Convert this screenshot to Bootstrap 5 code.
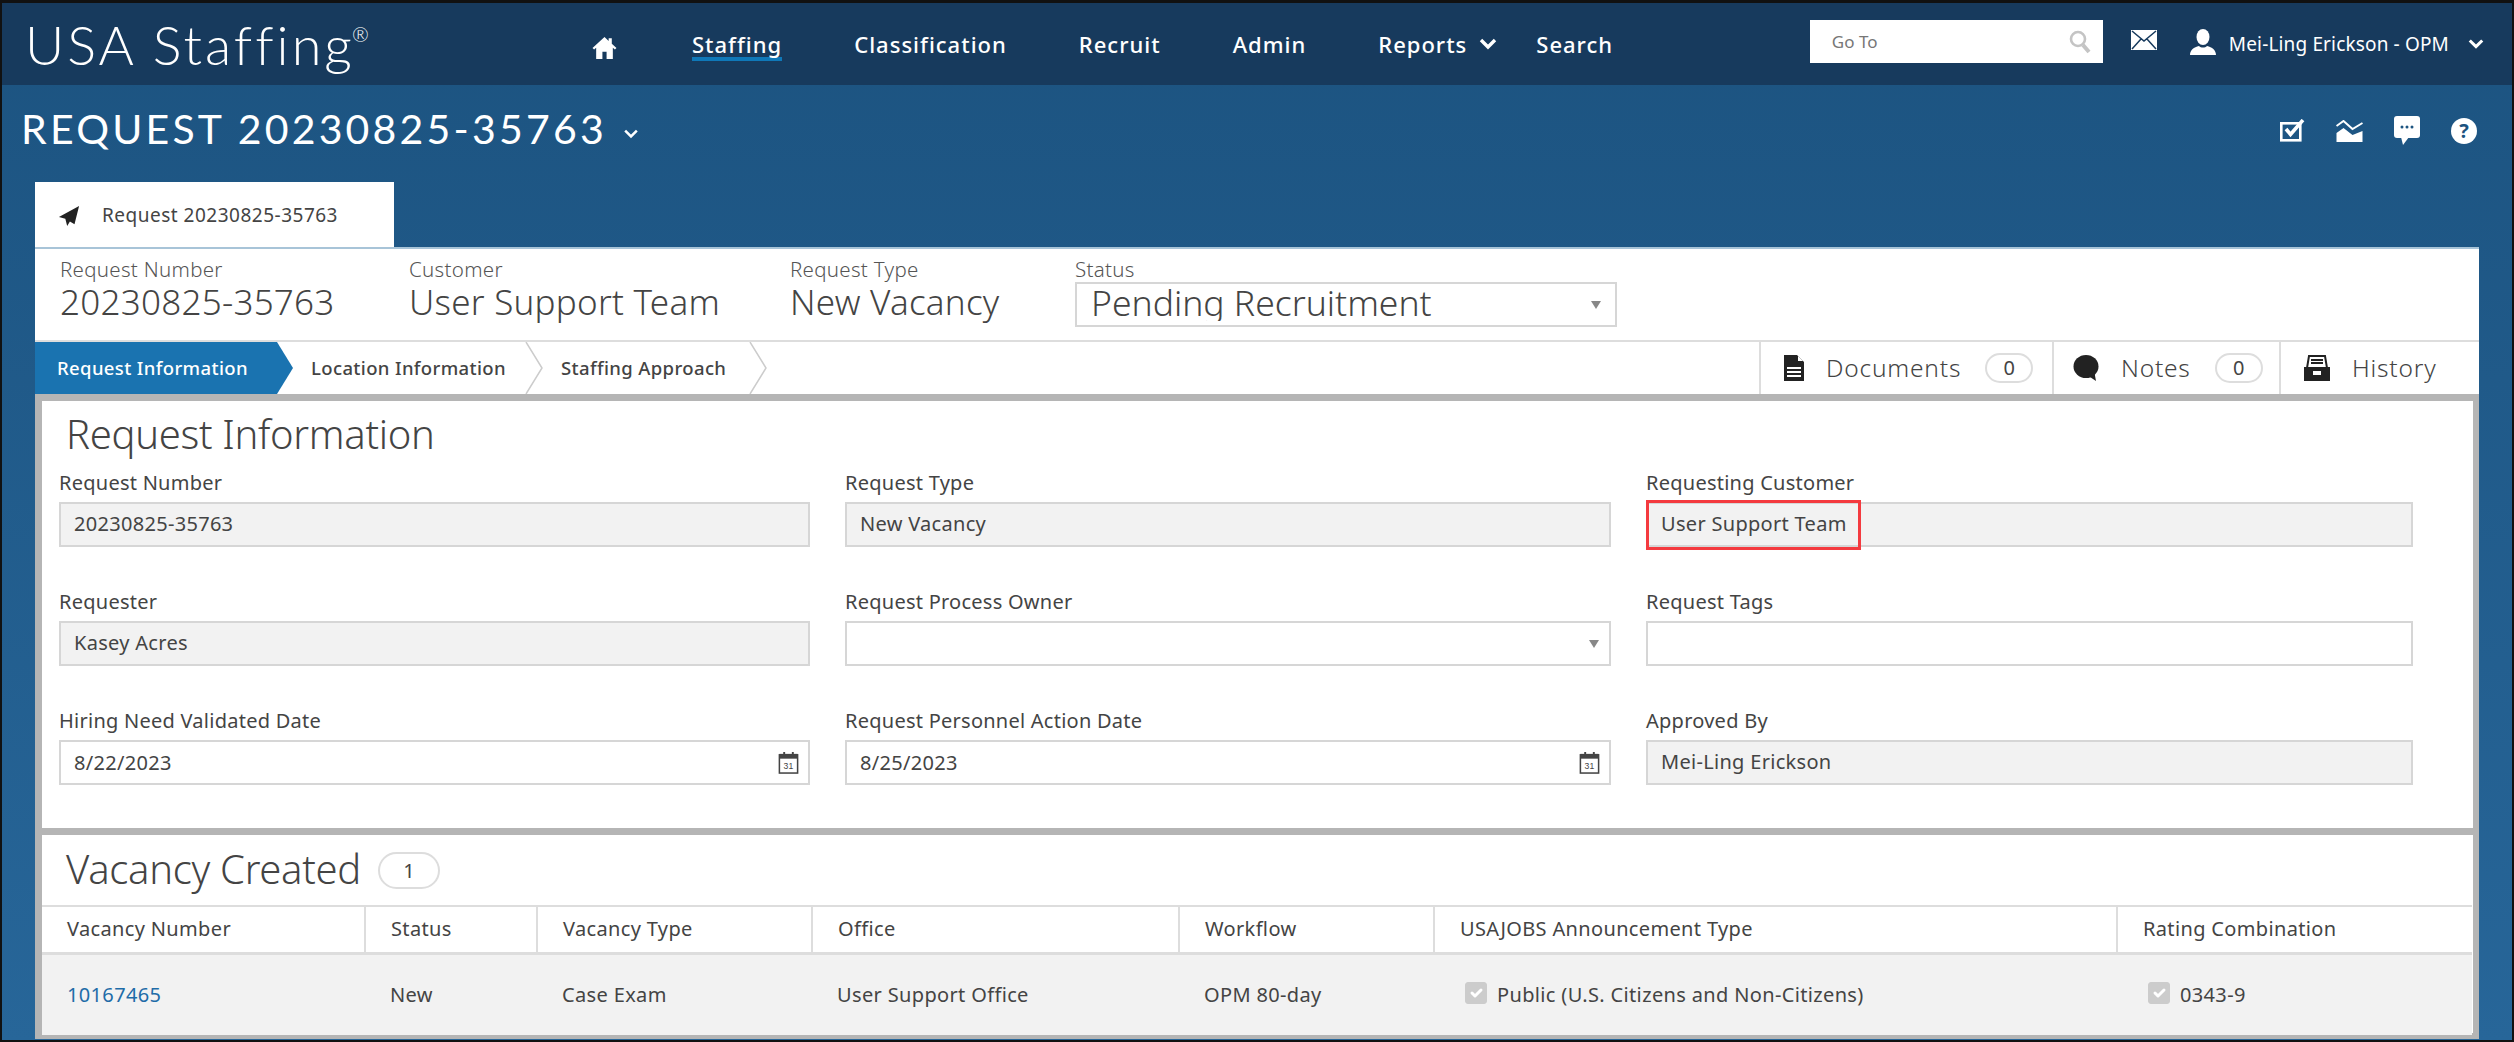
<!DOCTYPE html>
<html lang="en">
<head>
    <meta charset="UTF-8">
    <meta name="viewport" content="width=device-width, initial-scale=1.0">
    <title>USA Staffing - Request 20230825-35763</title>
    <link href="https://cdn.jsdelivr.net/npm/bootstrap@5.3.0/dist/css/bootstrap.min.css" rel="stylesheet">
    <style>
        html, body { height: 100%; }
        body {
            background: linear-gradient(#1c5380, #276699);
            border: 2px solid #111;
            border-top-width: 3px;
            font-family: "Noto Sans", "Open Sans", sans-serif;
            color: #444;
            overflow: hidden;
        }
        /* top bar */
        .top-bar { height: 82px; background: #173a5d; color: #fff; padding: 0 28px 0 23px; }
        .brand-name {
            width: 567px; font-family: Lato, sans-serif; font-weight: 300; font-size: 54px;
            letter-spacing: 3px; line-height: 1; color: #fff; padding-top: 2px;
        }
        .brand-name sup { font-size: 20px; top: -1.15em; letter-spacing: 0; margin-left: -3px; }
        .main-menu { gap: 72px; align-items: center; }
        .main-menu .nav-link {
            padding: 0; color: #fff; font-size: 22px; font-weight: 500; letter-spacing: 1px;
            line-height: 26px; display: flex; align-items: center; gap: 12px;
        }
        .main-menu .nav-link.is-current { box-shadow: 0 4px 0 0 #0f78b8; }
        .main-menu .home-link { padding-top: 6px; margin-right: 3px; }
        .main-menu .menu-last { margin-left: -33px; }
        .goto-box {
            width: 293px; height: 43px; border-radius: 0; border: 0; padding: 0 12px 0 22px;
            font-size: 17px; color: #777; margin-right: 28px; margin-bottom: 5px;
        }
        .user-icon { margin-left: 33px; margin-bottom: 4px; }
        .user-name { font-size: 19px; color: #fff; letter-spacing: .15px; margin: 0 19px 0 13px; }
        /* title band */
        .title-band { height: 97px; padding: 0 35px 0 19px; color: #fff; }
        .page-title {
            font-family: Lato, sans-serif; font-weight: 400; font-size: 41px; letter-spacing: 3.2px;
            margin: 0; line-height: 1; padding-bottom: 10px;
        }
        .title-tools { gap: 31px; padding-bottom: 6px; }
        .help-dot {
            width: 26px; height: 26px; border-radius: 50%; background: #fff; color: #1c5480;
            font-size: 20px; font-weight: 700; line-height: 26px; text-align: center;
        }
        /* white work area */
        .work-area { width: 2444px; margin-left: 33px; }
        .record-tab {
            width: 359px; height: 65px; background: #fff; padding-left: 23px; gap: 22px;
            font-size: 19px; color: #444; letter-spacing: .5px; padding-top: 2px;
        }
        .summary-strip { height: 93px; background: #fff; border-top: 2px solid #a8c4d8; padding: 8px 0 0 25px; }
        .summary-cell { line-height: 1; }
        .cell-number { width: 349px; }
        .cell-customer { width: 381px; }
        .cell-type { width: 285px; }
        .summary-label { font-size: 20.5px; font-weight: 300; line-height: 25px; color: #555; letter-spacing: .3px; }
        .summary-value { font-size: 35px; font-weight: 300; line-height: 40px; color: #444; letter-spacing: .25px; }
        .status-select {
            width: 542px; height: 45px; border: 2px solid #d6d6d6; border-radius: 0; color: #444;
            font-size: 35.5px; font-weight: 300; padding: 0 40px 4px 14px; line-height: 37px;
            background-size: 10px 8px; background-position: right 14px center;
            background-image: url("data:image/svg+xml,%3Csvg xmlns='http://www.w3.org/2000/svg' viewBox='0 0 10 8' preserveAspectRatio='none'%3E%3Cpath d='M0 0h10L5 8z' fill='%23888'/%3E%3C/svg%3E");
        }
        /* steps */
        .step-bar { height: 54px; background: #fff; border-top: 2px solid #ddd; }
        .step-item { font-size: 18.5px; color: #444; letter-spacing: .37px; font-weight: 500; line-height: 1; }
        .step-current {
            width: 258px; background: #1a73b0; color: #fff; padding-left: 22px;
            clip-path: polygon(0 0, 242px 0, 100% 50%, 242px 100%, 0 100%);
        }
        .step-gap { width: 18px; }
        .step-next { width: 214px; }
        .step-last { width: 188px; }
        .side-tab {
            border-left: 2px solid #ddd; font-size: 24.5px; font-weight: 300; color: #444;
            padding-left: 23px; gap: 22px; letter-spacing: .8px;
        }
        .tab-docs { width: 293px; }
        .tab-notes { width: 227px; padding-left: 19px; }
        .tab-history { width: 200px; }
        .count-pill {
            background: #fff; border: 2px solid #ddd; color: #444; border-radius: 15px;
            font-size: 20px; font-weight: 400; width: 48px; height: 30px; line-height: 26px; padding: 0;
            letter-spacing: 0; margin-left: 2px;
        }
        /* panels */
        .panel-wrap { background: #fff; border: 6px solid #b5b5b5; border-top-width: 7px; border-left-width: 7px; height: 645px; }
        .panel-title { font-size: 40px; font-weight: 300; color: #444; margin: 0; padding-left: 24px; height: 70px; line-height: 66px; letter-spacing: -.3px; }
        .field-grid {
            display: grid; grid-template-columns: 751px 766px 767px; column-gap: 35px; row-gap: 43px;
            padding-left: 17px; height: 357px; align-content: start;
        }
        .field-box { position: relative; }
        .field-box .form-label { font-size: 20px; line-height: 24px; color: #444; margin: 0 0 7px; display: block; letter-spacing: .25px; }
        .field-box .form-control, .field-box .form-select {
            height: 45px; border: 2px solid #d6d6d6; border-radius: 0; font-size: 20px; color: #444;
            padding: 0 13px; line-height: 39px; background-color: #fff; letter-spacing: .3px;
        }
        .field-box .form-select {
            background-size: 10px 8px; background-position: right 10px center;
            background-image: url("data:image/svg+xml,%3Csvg xmlns='http://www.w3.org/2000/svg' viewBox='0 0 10 8' preserveAspectRatio='none'%3E%3Cpath d='M0 0h10L5 8z' fill='%23888'/%3E%3C/svg%3E");
        }
        .field-box .form-control.is-locked { background-color: #f2f2f2; }
        .field-mark { position: absolute; left: 0; top: 29px; width: 215px; height: 50px; border: 3px solid #f43a3f; pointer-events: none; }
        .date-icon { margin-right: -4px; }
        .panel-second { border-top: 7px solid #b5b5b5; }
        .vacancy-head { height: 70px; padding-left: 24px; gap: 17px; }
        .vacancy-head .panel-title { padding: 0; height: auto; line-height: 1; margin-top: -3px; }
        .vacancy-head .count-pill { width: 62px; height: 37px; line-height: 33px; border-radius: 19px; margin: 0; }
        .vacancy-table { table-layout: fixed; width: 2430px; margin: 0; border-top: 2px solid #ddd; }
        .vacancy-table th, .vacancy-table td {
            font-size: 20px; font-weight: 400; color: #444; padding: 0 0 0 25px; vertical-align: middle; letter-spacing: .35px; border: 0;
        }
        .vacancy-table th { height: 47px; border-bottom: 3px solid #ddd; border-left: 2px solid #ddd; background: #fff; }
        .vacancy-table th:first-child { border-left: 0; }
        .vacancy-table td { height: 82px; background: #f2f2f2; }
        .vacancy-link { color: #1f6ca8; text-decoration: none; }
        .vacancy-table .form-check-input {
            width: 22px; height: 22px; margin: -6px 10px 0 6px; background-color: #ccc; border-color: #ccc;
            border-radius: 3px; opacity: 1; float: none; vertical-align: middle;
        }
    </style>
</head>
<body>
    <!-- Top bar -->
    <nav class="top-bar d-flex align-items-center">
        <a class="brand-name text-decoration-none" href="#">USA Staffing<sup>®</sup></a>
        <ul class="nav main-menu">
            <li class="nav-item"><a class="nav-link home-link" href="#" aria-label="Home">
                <svg width="25" height="25" viewBox="0 0 24 24" fill="#fff"><path d="M12 2 .5 12.5 2 14l2-1.8V23h6v-7h4v7h6V12.2l2 1.8 1.5-1.5L19 8.4V3h-3v2.7z"/></svg>
            </a></li>
            <li class="nav-item"><a class="nav-link is-current" href="#">Staffing</a></li>
            <li class="nav-item"><a class="nav-link" href="#">Classification</a></li>
            <li class="nav-item"><a class="nav-link" href="#">Recruit</a></li>
            <li class="nav-item"><a class="nav-link" href="#">Admin</a></li>
            <li class="nav-item"><a class="nav-link" href="#">Reports
                <svg width="18" height="12" viewBox="0 0 18 12" fill="none" stroke="#fff" stroke-width="3.4"><path d="M2 2l7 7 7-7"/></svg>
            </a></li>
            <li class="nav-item menu-last"><a class="nav-link" href="#">Search</a></li>
        </ul>
        <div class="ms-auto d-flex align-items-center">
            <div class="goto-box bg-white d-flex align-items-center justify-content-between">
                <span>Go To</span>
                <svg width="22" height="24" viewBox="0 0 22 24" fill="none" stroke="#c4c4c4"><circle cx="9" cy="9" r="7" stroke-width="2.6"/><path d="M14 15l6 7" stroke-width="4"/></svg>
            </div>
            <svg width="26" height="20" viewBox="0 0 26 20" class="mb-2"><rect width="26" height="20" fill="#fff"/><path d="M1 1l12 10L25 1M1 19l9-10M25 19l-9-10" stroke="#173a5d" stroke-width="1.5" fill="none"/></svg>
            <svg width="26" height="26" viewBox="0 0 26 26" fill="#fff" class="user-icon"><ellipse cx="13" cy="8" rx="6.5" ry="8"/><path d="M0 26c0-5 4-8 9-9 2 2 6 2 8 0 5 1 9 4 9 9z"/></svg>
            <span class="user-name">Mei-Ling Erickson - OPM</span>
            <svg width="16" height="12" viewBox="0 0 18 12" fill="none" stroke="#fff" stroke-width="3.4"><path d="M2 2l7 7 7-7"/></svg>
        </div>
    </nav>

    <!-- Title band -->
    <header class="title-band d-flex align-items-center justify-content-between">
        <div class="d-flex align-items-center gap-3">
            <h1 class="page-title">REQUEST 20230825-35763</h1>
            <svg width="16" height="10" viewBox="0 0 18 12" fill="none" stroke="#fff" stroke-width="3"><path d="M2 2l7 7 7-7"/></svg>
        </div>
        <div class="title-tools d-flex align-items-center">
            <svg width="25" height="23" viewBox="0 0 25 23" fill="none" stroke="#fff"><rect x="1.3" y="4.3" width="19" height="17" stroke-width="2.6"/><path d="M6 10l4.5 5.5L23 1" stroke-width="3.6"/></svg>
            <svg width="27" height="22" viewBox="0 0 26 22" fill="#fff"><path d="M0 6l7-5 9 8 10-6" fill="none" stroke="#fff" stroke-width="2"/><path d="M0 13l7-5 9 7 10-4v11H0z"/></svg>
            <svg width="26" height="29" viewBox="0 0 26 29" fill="#fff"><rect width="26" height="22" rx="3"/><path d="M7 21h8l-6 8z"/><g fill="#1c5480"><circle cx="8" cy="11" r="1.5"/><circle cx="13" cy="11" r="1.5"/><circle cx="18" cy="11" r="1.5"/></g></svg>
            <div class="help-dot">?</div>
        </div>
    </header>

    <main class="work-area">
        <div class="record-tab d-flex align-items-center">
            <svg width="22" height="22" viewBox="0 0 24 24" fill="#222"><path d="M23 1 1 13l7 2 2 8 3-5 5 3z"/></svg>
            <span>Request 20230825-35763</span>
        </div>

        <!-- Summary -->
        <div class="summary-strip d-flex">
            <div class="summary-cell cell-number"><div class="summary-label">Request Number</div><div class="summary-value">20230825-35763</div></div>
            <div class="summary-cell cell-customer"><div class="summary-label">Customer</div><div class="summary-value">User Support Team</div></div>
            <div class="summary-cell cell-type"><div class="summary-label">Request Type</div><div class="summary-value">New Vacancy</div></div>
            <div class="summary-cell">
                <div class="summary-label">Status</div>
                <select class="form-select status-select"><option>Pending Recruitment</option></select>
            </div>
        </div>

        <!-- Steps -->
        <div class="step-bar d-flex">
            <div class="step-item step-current d-flex align-items-center">Request Information</div>
            <div class="step-gap"></div>
            <div class="step-item step-next d-flex align-items-center">Location Information</div>
            <svg width="18" height="52" viewBox="0 0 18 52" fill="none" stroke="#ccc" stroke-width="1.5"><path d="M1 0l16 26L1 52"/></svg>
            <div class="step-gap"></div>
            <div class="step-item step-last d-flex align-items-center">Staffing Approach</div>
            <svg width="18" height="52" viewBox="0 0 18 52" fill="none" stroke="#ccc" stroke-width="1.5"><path d="M1 0l16 26L1 52"/></svg>
            <div class="ms-auto d-flex">
                <div class="side-tab tab-docs d-flex align-items-center">
                    <svg width="20" height="26" viewBox="0 0 20 26"><path d="M0 0h13l7 7v19H0z" fill="#222"/><path d="M14 1l5 5h-5z" fill="#fff"/><path d="M3 13h14M3 17h14M3 21h14" stroke="#fff" stroke-width="2"/></svg>
                    <span>Documents</span><span class="badge count-pill">0</span>
                </div>
                <div class="side-tab tab-notes d-flex align-items-center">
                    <svg width="26" height="26" viewBox="0 0 26 26" fill="#222"><ellipse cx="13" cy="11.5" rx="12.5" ry="11.5"/><path d="M14 20l9 6-2-11z"/></svg>
                    <span>Notes</span><span class="badge count-pill">0</span>
                </div>
                <div class="side-tab tab-history d-flex align-items-center">
                    <svg width="26" height="26" viewBox="0 0 26 26"><path d="M5 1h16l2 12H3z" fill="none" stroke="#222" stroke-width="2"/><path d="M7 5h12M7 8h12" stroke="#222" stroke-width="2"/><path d="M0 12h26v14H0z" fill="#222"/><rect x="9" y="16" width="8" height="4" fill="#fff"/></svg>
                    <span>History</span>
                </div>
            </div>
        </div>

        <div class="panel-wrap">
            <!-- Request information -->
            <h2 class="panel-title">Request Information</h2>
            <div class="field-grid">
                <div class="field-box"><label class="form-label">Request Number</label><div class="form-control is-locked">20230825-35763</div></div>
                <div class="field-box"><label class="form-label">Request Type</label><div class="form-control is-locked">New Vacancy</div></div>
                <div class="field-box"><label class="form-label">Requesting Customer</label><div class="form-control is-locked">User Support Team</div><div class="field-mark"></div></div>
                <div class="field-box"><label class="form-label">Requester</label><div class="form-control is-locked">Kasey Acres</div></div>
                <div class="field-box"><label class="form-label">Request Process Owner</label><select class="form-select"><option></option></select></div>
                <div class="field-box"><label class="form-label">Request Tags</label><input class="form-control" type="text"></div>
                <div class="field-box"><label class="form-label">Hiring Need Validated Date</label>
                    <div class="form-control d-flex align-items-center justify-content-between"><span>8/22/2023</span>
                        <svg width="21" height="23" viewBox="0 0 21 24" class="date-icon"><rect x="1" y="4" width="19" height="19" fill="#fff" stroke="#444" stroke-width="1.6"/><rect x="1" y="3" width="19" height="5" fill="#444"/><path d="M6 1v4M15 1v4" stroke="#444" stroke-width="2"/><text x="10.5" y="19" font-size="9" font-family="Liberation Sans, sans-serif" text-anchor="middle" fill="#444">31</text></svg>
                    </div></div>
                <div class="field-box"><label class="form-label">Request Personnel Action Date</label>
                    <div class="form-control d-flex align-items-center justify-content-between"><span>8/25/2023</span>
                        <svg width="21" height="23" viewBox="0 0 21 24" class="date-icon"><rect x="1" y="4" width="19" height="19" fill="#fff" stroke="#444" stroke-width="1.6"/><rect x="1" y="3" width="19" height="5" fill="#444"/><path d="M6 1v4M15 1v4" stroke="#444" stroke-width="2"/><text x="10.5" y="19" font-size="9" font-family="Liberation Sans, sans-serif" text-anchor="middle" fill="#444">31</text></svg>
                    </div></div>
                <div class="field-box"><label class="form-label">Approved By</label><div class="form-control is-locked">Mei-Ling Erickson</div></div>
            </div>

            <!-- Vacancy created -->
            <div class="panel-second">
                <div class="vacancy-head d-flex align-items-center">
                    <h2 class="panel-title">Vacancy Created</h2>
                    <span class="badge count-pill">1</span>
                </div>
                <table class="table vacancy-table">
                    <colgroup><col width="323"><col width="172"><col width="275"><col width="367"><col width="255"><col width="683"><col width="355"></colgroup>
                    <thead><tr>
                        <th>Vacancy Number</th><th>Status</th><th>Vacancy Type</th><th>Office</th><th>Workflow</th><th>USAJOBS Announcement Type</th><th>Rating Combination</th>
                    </tr></thead>
                    <tbody><tr>
                        <td><a class="vacancy-link" href="#">10167465</a></td>
                        <td>New</td>
                        <td>Case Exam</td>
                        <td>User Support Office</td>
                        <td>OPM 80-day</td>
                        <td><input class="form-check-input" type="checkbox" checked disabled>Public (U.S. Citizens and Non-Citizens)</td>
                        <td><input class="form-check-input" type="checkbox" checked disabled>0343-9</td>
                    </tr></tbody>
                </table>
            </div>
        </div>
    </main>
</body>
</html>
